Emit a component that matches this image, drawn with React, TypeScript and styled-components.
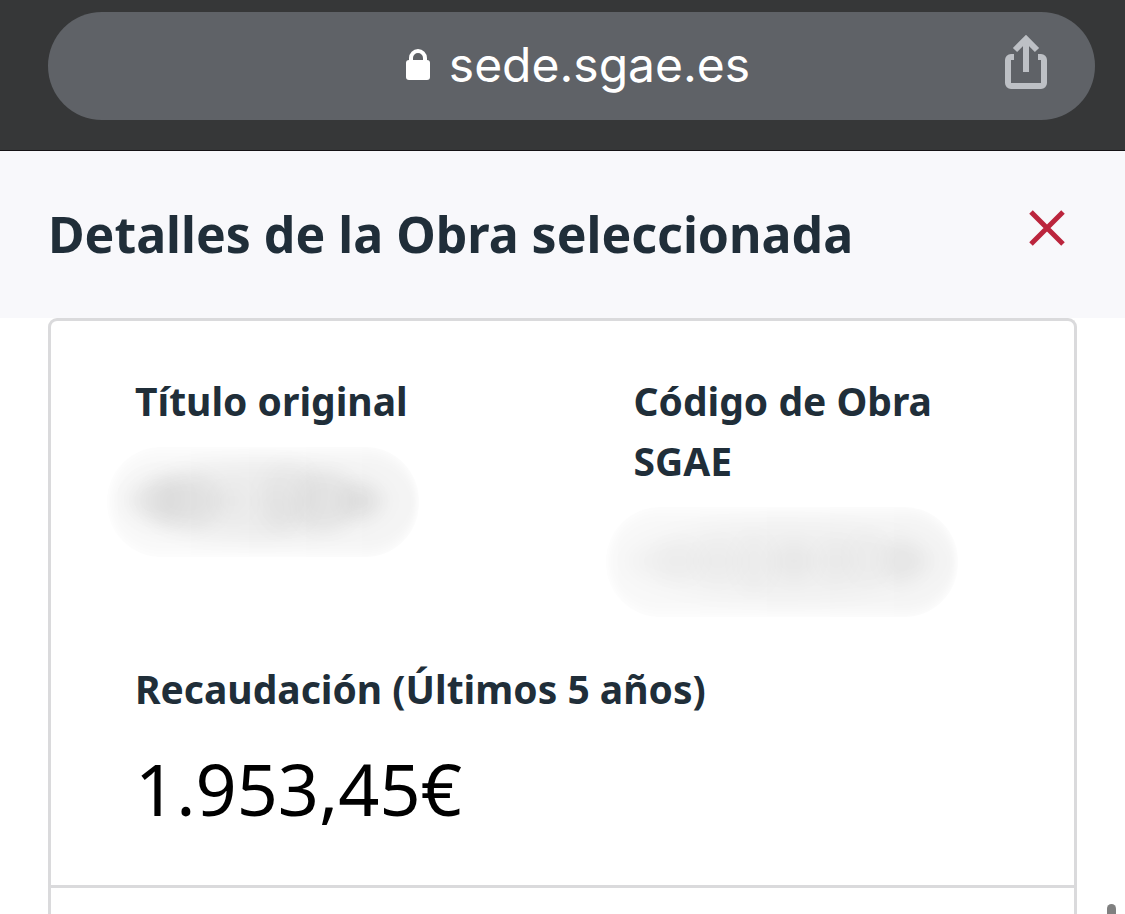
import React from "react";
import styled, { createGlobalStyle } from "styled-components";

const GlobalStyle = createGlobalStyle`
  *, *::before, *::after { box-sizing: border-box; }
  body { margin: 0; background: #fff; color: #000; font-family: "Noto Sans", "Open Sans", sans-serif; }
  button { border: 0; padding: 0; background: none; font: inherit; color: inherit; cursor: pointer; }
  h1, dl, dt, dd { margin: 0; }
`;

const Page = styled.div`
  display: flex;
  flex-direction: column;
  min-height: 100vh;
`;

const BrowserBar = styled.header`
  padding: 12px 30px 30px 48px;
  background: #363738;
  border-bottom: 1px solid #151316;
`;

const AddressPill = styled.div`
  display: grid;
  grid-template-columns: 1fr auto 1fr;
  align-items: center;
  height: 108px;
  padding: 0 48px 0 60px;
  border-radius: 54px;
  background: #5f6267;
`;

const AddressButton = styled.button`
  grid-column: 2;
  display: flex;
  align-items: center;
  gap: 18px;
  padding-bottom: 2px;
  color: #fff;
  font-family: Inter, "Liberation Sans", sans-serif;
  font-size: 48px;
  line-height: 60px;
`;

const ShareButton = styled.button`
  justify-self: end;
  display: flex;
  padding-bottom: 9px;
  color: #bdc0c5;
`;

const TitleBar = styled.div`
  display: flex;
  justify-content: space-between;
  align-items: flex-start;
  padding: 53px 60px 54px 48px;
  background: #f8f8fb;
`;

const Title = styled.h1`
  color: #202e39;
  font-size: 50px;
  font-weight: 700;
  line-height: 60px;
`;

const CloseButton = styled.button`
  display: flex;
  padding-top: 6px;
  color: #bb253d;
`;

const Card = styled.main`
  flex: 1;
  display: flex;
  flex-direction: column;
  margin: 0 48px;
  border: 3px solid #dadadc;
  border-bottom: 0;
  border-radius: 9px 9px 0 0;
`;

const Details = styled.dl`
  display: grid;
  grid-template-columns: 1fr 1fr;
  column-gap: 84px;
  row-gap: 42px;
  padding: 50px 26px 43px 84px;
  border-bottom: 3px solid #dadadc;
`;

const Field = styled.div<{ $wide?: boolean }>`
  grid-column: ${(p) => (p.$wide ? "1 / -1" : "auto")};
`;

const Label = styled.dt<{ $narrow?: boolean }>`
  max-width: ${(p) => (p.$narrow ? "360px" : "none")};
  color: #202e39;
  font-size: 39px;
  font-weight: 700;
  line-height: 60px;
`;

const Amount = styled.dd`
  padding-top: 15px;
  font-size: 72px;
  line-height: 108px;
`;

const HiddenValue = styled.dd`
  display: flex;
  padding-top: 16px;
  margin-left: -28px;
`;

const NextSection = styled.section`
  min-height: 26px;
`;

const ScrollThumb = styled.div`
  position: fixed;
  right: 9px;
  bottom: 0;
  width: 9px;
  height: 10px;
  border-radius: 5px 5px 0 0;
  background: #808080;
`;

type Spot = [cx: number, cy: number, rx: number, ry: number, opacity: number];

const titleSpots: Spot[] = [
  [150, 54, 130, 38, 0.04],
  [50, 52, 30, 26, 0.02],
  [78, 54, 36, 26, 0.05],
  [126, 54, 18, 18, 0.015],
  [182, 48, 28, 34, 0.02],
  [170, 62, 18, 24, 0.015],
  [218, 54, 30, 28, 0.035],
  [252, 54, 16, 14, 0.05],
];

const codeSpots: Spot[] = [
  [176, 54, 155, 38, 0.025],
  [72, 54, 24, 18, 0.018],
  [112, 54, 22, 20, 0.018],
  [148, 56, 18, 28, 0.018],
  [188, 54, 22, 18, 0.03],
  [230, 54, 20, 20, 0.018],
  [262, 50, 20, 26, 0.012],
  [296, 54, 20, 20, 0.03],
];

function Smudge({ id, width, spots }: { id: string; width: number; spots: Spot[] }) {
  return (
    <svg width={width} height="110" viewBox={`0 0 ${width} 110`} role="img" aria-label="Oculto">
      <defs>
        <linearGradient id={`${id}-fade`}>
          <stop offset="0" stopColor="#000" stopOpacity="0.025" />
          <stop offset="0.3" stopColor="#000" stopOpacity="0.03" />
          <stop offset="1" stopColor="#000" stopOpacity="0.045" />
        </linearGradient>
        <filter id={`${id}-edge`} x="-10%" y="-20%" width="120%" height="140%">
          <feGaussianBlur stdDeviation="3 8" />
        </filter>
        <filter id={`${id}-spot`} x="-100%" y="-100%" width="300%" height="300%">
          <feGaussianBlur stdDeviation="9" />
        </filter>
        <clipPath id={`${id}-clip`}>
          <rect width={width} height="110" rx="54" />
        </clipPath>
      </defs>
      <g clipPath={`url(#${id}-clip)`}>
        <rect x="2" y="3" width={width - 4} height="104" rx="52" fill={`url(#${id}-fade)`} filter={`url(#${id}-edge)`} />
        {spots.map(([cx, cy, rx, ry, opacity]) => (
          <ellipse key={cx} cx={cx} cy={cy} rx={rx} ry={ry} fillOpacity={opacity} filter={`url(#${id}-spot)`} />
        ))}
      </g>
    </svg>
  );
}

function LockIcon() {
  return (
    <svg width="26" height="32" viewBox="0 0 26 32" aria-hidden="true">
      <rect x="1" y="11" width="24" height="20" rx="3" fill="currentColor" />
      <path d="M6 12V9a7 7 0 0 1 14 0v3" fill="none" stroke="currentColor" strokeWidth="4" />
    </svg>
  );
}

function ShareIcon() {
  return (
    <svg width="42" height="54" viewBox="0 0 42 54" fill="none" stroke="currentColor" aria-hidden="true">
      <path d="M9 22H6a3 3 0 0 0-3 3v23a3 3 0 0 0 3 3h30a3 3 0 0 0 3-3V25a3 3 0 0 0-3-3h-3" strokeWidth="6" />
      <path d="M21 37V5M10 15 21 4l11 11" strokeWidth="6" />
    </svg>
  );
}

function CloseIcon() {
  return (
    <svg width="36" height="36" viewBox="0 0 36 36" fill="none" stroke="currentColor" strokeWidth="5" aria-hidden="true">
      <path d="M2 2 34 34M34 2 2 34" />
    </svg>
  );
}

export default function App() {
  return (
    <>
      <GlobalStyle />
      <Page>
        <BrowserBar>
          <AddressPill>
            <AddressButton type="button">
              <LockIcon />
              <span>sede.sgae.es</span>
            </AddressButton>
            <ShareButton type="button" aria-label="Compartir">
              <ShareIcon />
            </ShareButton>
          </AddressPill>
        </BrowserBar>
        <TitleBar>
          <Title>Detalles de la Obra seleccionada</Title>
          <CloseButton type="button" aria-label="Cerrar">
            <CloseIcon />
          </CloseButton>
        </TitleBar>
        <Card>
          <Details>
            <Field>
              <Label>Título original</Label>
              <HiddenValue>
                <Smudge id="titulo" width={312} spots={titleSpots} />
              </HiddenValue>
            </Field>
            <Field>
              <Label $narrow>Código de Obra SGAE</Label>
              <HiddenValue>
                <Smudge id="codigo" width={352} spots={codeSpots} />
              </HiddenValue>
            </Field>
            <Field $wide>
              <Label>Recaudación (Últimos 5 años)</Label>
              <Amount>1.953,45€</Amount>
            </Field>
          </Details>
          <NextSection />
        </Card>
      </Page>
      <ScrollThumb />
    </>
  );
}
